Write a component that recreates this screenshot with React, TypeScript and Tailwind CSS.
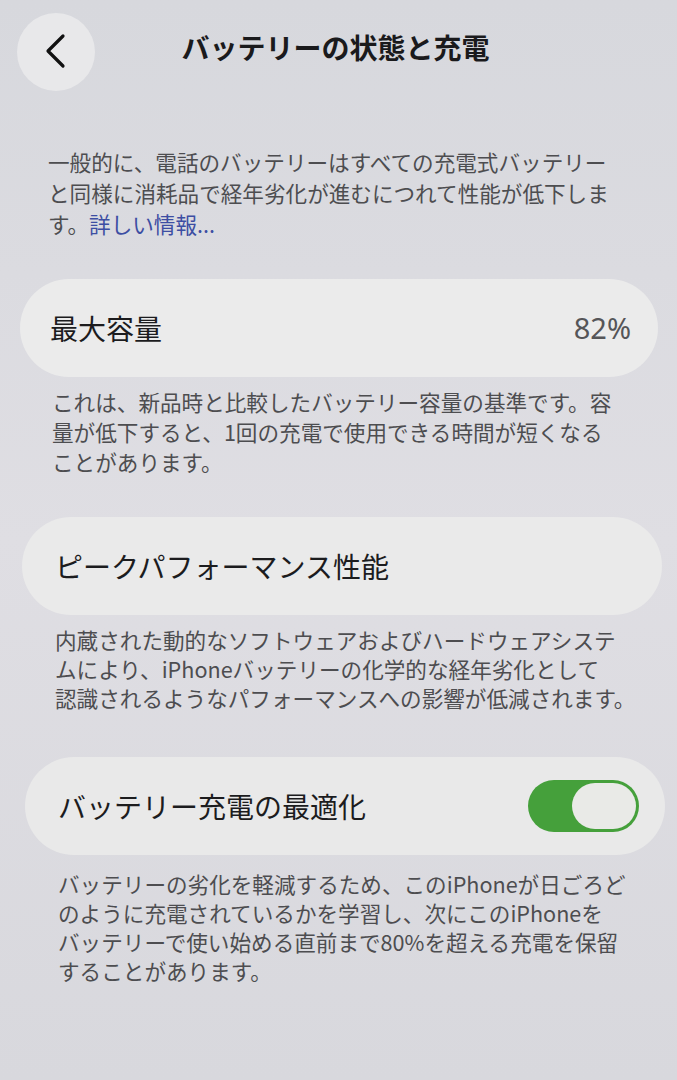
const jp = { fontFamily: '"Noto Sans CJK JP", "Noto Sans", sans-serif' };

function Chevron() {
  return (
    <svg width="28" height="40" viewBox="0 0 28 40" fill="none">
      <path
        d="M21 4 L6 19 L21 34"
        stroke="#111"
        strokeWidth="3.2"
        strokeLinecap="round"
        strokeLinejoin="round"
      />
    </svg>
  );
}

function Toggle() {
  return (
    <div className="flex h-[52px] w-[111px] justify-end rounded-full bg-[#45a03b] p-[3px]">
      <div className="h-[46px] w-[64px] rounded-full bg-[#e9eae7]" />
    </div>
  );
}

function Note({ lines, className }: { lines: string[]; className: string }) {
  return (
    <div className={`text-[21.6px] text-[#4d4d50] ${className}`}>
      {lines.map((l, i) => (
        <div key={i} className="whitespace-nowrap">
          {l}
        </div>
      ))}
    </div>
  );
}

export default function App() {
  return (
    <div
      style={jp}
      className="h-[1080px] w-[677px] overflow-hidden bg-gradient-to-b from-[#d7d8dd] via-[#dfdee3] to-[#d8d8dd]"
    >
      {/* nav */}
      <div className="flex items-center px-[17px] pt-[13px]">
        <div className="flex h-[78px] w-[78px] items-center justify-center rounded-full bg-[#e8e8ea]">
          <Chevron />
        </div>
        <h1 className="flex-1 pb-[10px] pr-[6px] text-center text-[28px] font-bold text-[#1a1a1c]">
          バッテリーの状態と充電
        </h1>
        <div className="w-[78px]" />
      </div>

      <div className="ml-[48px] mt-[55px] text-[21.6px] leading-[31px] text-[#4d4d50]">
        <div className="whitespace-nowrap">一般的に、電話のバッテリーはすべての充電式バッテリー</div>
        <div className="whitespace-nowrap">と同様に消耗品で経年劣化が進むにつれて性能が低下しま</div>
        <div className="whitespace-nowrap">
          す。<span className="text-[#3d4ea3]">詳しい情報...</span>
        </div>
      </div>

      {/* 最大容量 */}
      <div className="ml-[20px] mt-[40px] flex h-[98px] w-[638px] items-center justify-between rounded-[49px] bg-[#ebebeb] pl-[30px] pr-[27px]">
        <span className="text-[28px] text-[#1c1c1e]">最大容量</span>
        <span className="text-[29px] text-[#555558]" style={{ fontFamily: '"Noto Sans", sans-serif' }}>
          82%
        </span>
      </div>
      <Note
        className="ml-[52px] mt-[10px] leading-[30px]"
        lines={[
          "これは、新品時と比較したバッテリー容量の基準です。容",
          "量が低下すると、1回の充電で使用できる時間が短くなる",
          "ことがあります。",
        ]}
      />

      {/* ピークパフォーマンス */}
      <div className="ml-[22px] mt-[40px] flex h-[98px] w-[640px] items-center rounded-[49px] bg-[#eaeaea] pl-[33px]">
        <span className="text-[28px] text-[#1c1c1e]">ピークパフォーマンス性能</span>
      </div>
      <Note
        className="ml-[55px] mt-[10px] leading-[29px]"
        lines={[
          "内蔵された動的なソフトウェアおよびハードウェアシステ",
          "ムにより、iPhoneバッテリーの化学的な経年劣化として",
          "認識されるようなパフォーマンスへの影響が低減されます。",
        ]}
      />

      {/* 充電の最適化 */}
      <div className="ml-[25px] mt-[45px] flex h-[98px] w-[640px] items-center justify-between rounded-[49px] bg-[#e9e9e9] pl-[33px] pr-[26px]">
        <span className="text-[28px] text-[#1c1c1e]">バッテリー充電の最適化</span>
        <Toggle />
      </div>
      <Note
        className="ml-[58px] mt-[14px] leading-[29px]"
        lines={[
          "バッテリーの劣化を軽減するため、このiPhoneが日ごろど",
          "のように充電されているかを学習し、次にこのiPhoneを",
          "バッテリーで使い始める直前まで80%を超える充電を保留",
          "することがあります。",
        ]}
      />
    </div>
  );
}
